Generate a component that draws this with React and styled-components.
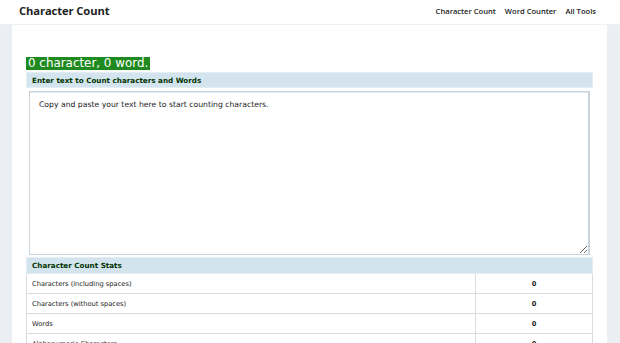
import React, { useState } from "react";
import styled, { createGlobalStyle } from "styled-components";

const GlobalStyle = createGlobalStyle`
  html, body {
    margin: 0;
    padding: 0;
    background: #ffffff;
    font-family: "DejaVu Sans", sans-serif;
  }
`;

const Page = styled.div`
  width: 620px;
  height: 343px;
  overflow: hidden;
  display: flex;
  flex-direction: column;
`;

const TopBar = styled.header`
  height: 24px;
  flex: none;
  display: flex;
  align-items: center;
  justify-content: space-between;
  padding: 0 24px 0 19px;
  border-bottom: 1px solid #f0f1f3;
  background: #fff;
`;

const Brand = styled.div`
  font-family: "Open Sans", sans-serif;
  font-weight: 700;
  font-size: 11.2px;
  color: #222;
  letter-spacing: -0.1px;
  margin-top: -3px;
`;

const Nav = styled.nav`
  display: flex;
  gap: 9px;
  margin-top: -2px;
`;

const NavLink = styled.a`
  font-family: "Open Sans", sans-serif;
  font-size: 7.6px;
  font-weight: 600;
  color: #222;
  text-decoration: none;
`;

const Shell = styled.div`
  flex: 1;
  background: #ebeef2;
  padding: 0 13px 0 12px;
  display: flex;
`;

const Main = styled.main`
  flex: 1;
  background: #fff;
  padding: 32px 14px 0 14px;
  display: flex;
  flex-direction: column;
  align-items: flex-start;
`;

const Badge = styled.div`
  background: #1f8a1f;
  color: #fff;
  font-size: 11.9px;
  line-height: 13px;
  padding: 0 2px;
  margin-bottom: 2px;
`;

const Panel = styled.section`
  width: 100%;
  display: flex;
  flex-direction: column;
`;

const PanelHead = styled.div`
  background: #d4e4ee;
  border: 1px solid #e3edf3;
  color: #003300;
  font-weight: 700;
  font-size: 7.2px;
  height: 16px;
  display: flex;
  align-items: center;
  padding: 0 5px;
  box-sizing: border-box;
`;

const TextBox = styled.textarea`
  margin: 3px 3px 2px 3px;
  height: 164px;
  box-sizing: border-box;
  border: 1px solid #c9d3dc;
  border-right-width: 2px;
  box-shadow: inset 0 1px 0 #e4e8ec;
  padding: 8px 9px;
  font-family: "DejaVu Sans", sans-serif;
  font-size: 7.7px;
  color: #222;
  resize: vertical;
  outline: none;
  &::placeholder {
    color: #222;
  }
`;

const Stats = styled.table`
  width: 100%;
  border-collapse: collapse;
  font-size: 6.7px;
  color: #1e1e1e;
`;

const StatsHead = styled.th`
  background: #d4e4ee;
  color: #003300;
  font-size: 7.2px;
  font-weight: 700;
  text-align: left;
  height: 15px;
  padding: 0 5px;
  border: 1px solid #e3edf3;
`;

const Cell = styled.td`
  height: 19px;
  padding: 0 5px;
  border: 1px solid #dcdcdc;
  text-align: ${(p) => (p.$value ? "center" : "left")};
  font-weight: ${(p) => (p.$value ? 700 : 400)};
  width: ${(p) => (p.$value ? "106px" : "auto")};
`;

const rows = [
  "Characters (including spaces)",
  "Characters (without spaces)",
  "Words",
  "Alphanumeric Characters",
];

export default function App() {
  const [text, setText] = useState("");
  const chars = text.length;
  const words = text.trim() ? text.trim().split(/\s+/).length : 0;
  const values = [chars, text.replace(/\s/g, "").length, words, text.replace(/[^a-z0-9]/gi, "").length];

  return (
    <Page>
      <GlobalStyle />
      <TopBar>
        <Brand>Character Count</Brand>
        <Nav>
          <NavLink href="#">Character Count</NavLink>
          <NavLink href="#">Word Counter</NavLink>
          <NavLink href="#">All Tools</NavLink>
        </Nav>
      </TopBar>
      <Shell>
        <Main>
          <Badge>
            {chars} character, {words} word.
          </Badge>
          <Panel>
            <PanelHead>Enter text to Count characters and Words</PanelHead>
            <TextBox
              value={text}
              onChange={(e) => setText(e.target.value)}
              placeholder="Copy and paste your text here to start counting characters."
            />
          </Panel>
          <Stats>
            <thead>
              <tr>
                <StatsHead colSpan={2}>Character Count Stats</StatsHead>
              </tr>
            </thead>
            <tbody>
              {rows.map((label, i) => (
                <tr key={label}>
                  <Cell>{label}</Cell>
                  <Cell $value>{values[i]}</Cell>
                </tr>
              ))}
            </tbody>
          </Stats>
        </Main>
      </Shell>
    </Page>
  );
}
